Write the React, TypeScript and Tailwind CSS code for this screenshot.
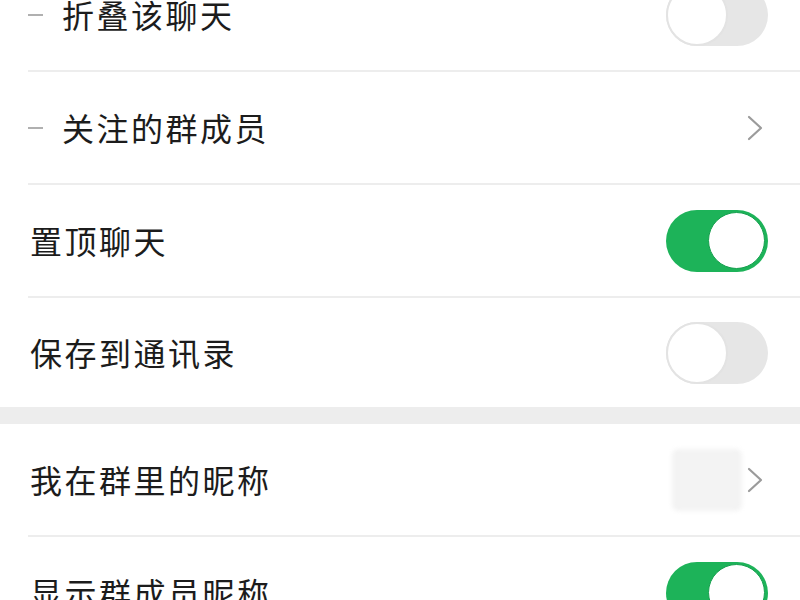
import type { ReactNode } from "react";

function Toggle({ on }: { on: boolean }) {
  return on ? (
    <div className="w-[102px] h-[62px] rounded-full bg-[#1db359] flex items-center justify-end pr-[3px] shrink-0">
      <div className="w-[57px] h-[57px] rounded-full bg-white border border-[#17a04f]" />
    </div>
  ) : (
    <div className="w-[102px] h-[62px] rounded-full bg-[#e6e6e6] flex items-center justify-start shrink-0">
      <div className="w-[62px] h-[62px] rounded-full bg-white border-2 border-[#e3e3e3]" />
    </div>
  );
}

function Chevron() {
  return (
    <svg width="18" height="28" viewBox="0 0 18 28" className="shrink-0">
      <path d="M3 3 L15 14 L3 25" fill="none" stroke="#9b9b9b" strokeWidth="2.2" strokeLinecap="round" strokeLinejoin="round" />
    </svg>
  );
}

function Row({
  label,
  dash,
  right,
  line = true,
  h = "h-[111px]",
}: {
  label: string;
  dash?: boolean;
  right: ReactNode;
  line?: boolean;
  h?: string;
}) {
  return (
    <div>
      <div className={`${h} flex items-center pl-[30px] pr-[32px]`}>
        {dash && <div className="w-[15px] h-[2px] bg-[#b0b0b0] mr-[19px] -ml-[2px]" />}
        <span className="flex-1 text-[32px] text-[#1c1c1c] tracking-[2.5px] -mt-[2px]">{label}</span>
        {right}
      </div>
      {line && <div className="ml-[28px] h-[2px] bg-[#ededed]" />}
    </div>
  );
}

export default function App() {
  return (
    <div
      className="w-[800px] h-[600px] overflow-hidden bg-white"
      style={{ fontFamily: '"Noto Sans CJK SC", "Noto Sans", sans-serif' }}
    >
      <div className="-mt-[41px]">
        <Row label="折叠该聊天" dash right={<Toggle on={false} />} />
        <Row label="关注的群成员" dash right={<div className="pr-[4px]"><Chevron /></div>} />
        <Row label="置顶聊天" right={<Toggle on />} />
        <Row label="保存到通讯录" right={<Toggle on={false} />} line={false} h="h-[109px]" />
        <div className="h-[17px] bg-[#ededed]" />
        <Row
          label="我在群里的昵称"
          right={
            <div className="flex items-center gap-[4px] pr-[4px]">
              <div className="w-[70px] h-[62px] bg-[#f3f3f3] rounded-[6px] blur-[2px]" />
              <Chevron />
            </div>
          }
        />
        <Row label="显示群成员昵称" right={<Toggle on />} />
      </div>
    </div>
  );
}
